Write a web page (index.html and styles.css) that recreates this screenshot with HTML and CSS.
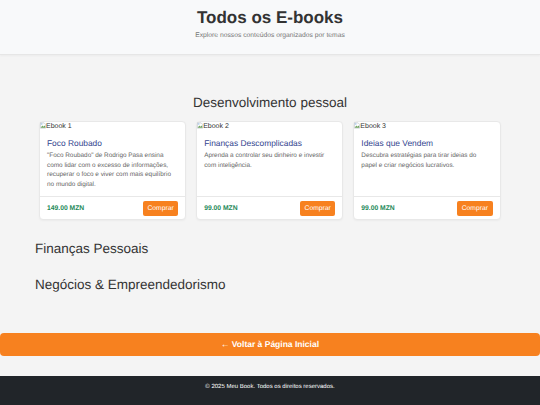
FILE: index.html
```html
<!DOCTYPE html>
<html lang="pt">
<head>
    <meta charset="UTF-8">
    <meta name="viewport" content="width=device-width, initial-scale=1.0">
    <title>Todos os E-books</title>
    <link rel="stylesheet" href="styles.css">
</head>
<body>
    <header class="topo">
        <h1>Todos os E-books</h1>
        <p>Explore nossos conteúdos organizados por temas</p>
    </header>
    <main class="conteudo">
        <section class="categoria">
            <h2 class="titulo-centro">Desenvolvimento pessoal</h2>
            <div class="cards">
                <article class="card">
                    <div class="capa">
                        <svg class="quebrada" viewBox="0 0 8 8"><path d="M.5.5h5l2 2v5h-7z" fill="#fff" stroke="#a9b0b8" stroke-width=".7"/><path d="M1 7l2-3 1.5 1.500L6 4l1 1.500V7z" fill="#6fa35f"/><path d="M1.200 1.200h2v1.600h-2z" fill="#9cc0ea"/></svg>
                        <span>Ebook 1</span>
                    </div>
                    <div class="corpo">
                        <h3>Foco Roubado</h3>
                        <p>"Foco Roubado" de Rodrigo Pasa ensina como lidar com o excesso de informações, recuperar o foco e viver com mais equilíbrio no mundo digital.</p>
                    </div>
                    <div class="rodape-card">
                        <strong>149.00 MZN</strong>
                        <a class="comprar" href="#">Comprar</a>
                    </div>
                </article>
                <article class="card">
                    <div class="capa">
                        <svg class="quebrada" viewBox="0 0 8 8"><path d="M.5.5h5l2 2v5h-7z" fill="#fff" stroke="#a9b0b8" stroke-width=".7"/><path d="M1 7l2-3 1.5 1.500L6 4l1 1.500V7z" fill="#6fa35f"/><path d="M1.200 1.200h2v1.600h-2z" fill="#9cc0ea"/></svg>
                        <span>Ebook 2</span>
                    </div>
                    <div class="corpo">
                        <h3>Finanças Descomplicadas</h3>
                        <p>Aprenda a controlar seu dinheiro e investir com inteligência.</p>
                    </div>
                    <div class="rodape-card">
                        <strong>99.00 MZN</strong>
                        <a class="comprar" href="#">Comprar</a>
                    </div>
                </article>
                <article class="card">
                    <div class="capa">
                        <svg class="quebrada" viewBox="0 0 8 8"><path d="M.5.5h5l2 2v5h-7z" fill="#fff" stroke="#a9b0b8" stroke-width=".7"/><path d="M1 7l2-3 1.5 1.500L6 4l1 1.500V7z" fill="#6fa35f"/><path d="M1.200 1.200h2v1.600h-2z" fill="#9cc0ea"/></svg>
                        <span>Ebook 3</span>
                    </div>
                    <div class="corpo">
                        <h3>Ideias que Vendem</h3>
                        <p>Descubra estratégias para tirar ideias do papel e criar negócios lucrativos.</p>
                    </div>
                    <div class="rodape-card">
                        <strong>99.00 MZN</strong>
                        <a class="comprar" href="#">Comprar</a>
                    </div>
                </article>
            </div>
        </section>
        <h2 class="titulo-lado">Finanças Pessoais</h2>
        <h2 class="titulo-lado">Negócios &amp; Empreendedorismo</h2>
    </main>
    <a class="voltar" href="#">← Voltar à Página Inicial</a>
    <footer class="rodape">© 2025 Meu Book. Todos os direitos reservados.</footer>
</body>
</html>
```

FILE: styles.css
```css
*{
    box-sizing: border-box;
}
body{
    margin: 0;
    background: #f4f4f4;
    color: #333;
    font-family: "Liberation Sans", Arial, sans-serif;
    text-rendering: geometricPrecision;
}
.topo{
    height: 55px;
    padding-top: 8px;
    background: #f8f9fa;
    border-bottom: 1px solid #e6e6e6;
    box-shadow: 0 1px 2px rgba(0,0,0,.04);
    text-align: center;
}
.topo h1{
    margin: 0;
    font-size: 17px;
    line-height: 19px;
}
.topo p{
    margin: 5px 0 0;
    font-size: 6.75px;
    line-height: 8px;
    color: #777;
}
.conteudo{
    padding: 39px 35px 0;
}
.categoria{
    margin-bottom: 20px;
}
.titulo-centro{
    margin: 0 0 10px;
    font-size: 13.5px;
    font-weight: normal;
    line-height: 17px;
    text-align: center;
}
.cards{
    display: grid;
    grid-template-columns: repeat(3, 1fr);
    gap: 10px;
    width: 461.500px;
    margin-left: 4px;
}
.card{
    display: flex;
    flex-direction: column;
    height: 99px;
    background: #fff;
    border: 1px solid #e8e8e8;
    border-radius: 4px;
    box-shadow: 0 1px 2px rgba(0,0,0,.04);
}
.capa{
    display: flex;
    align-items: flex-start;
    height: 9px;
    font-size: 7px;
    line-height: 9px;
}
.quebrada{
    width: 6px;
    height: 7px;
}
.corpo{
    flex: 1;
    padding: 7px 7px 0;
}
.corpo h3{
    margin: 0 0 2px;
    font-size: 8.4px;
    font-weight: normal;
    line-height: 11px;
    color: #34468f;
}
.corpo p{
    margin: 0;
    font-size: 6.4px;
    line-height: 9.6px;
    color: #666;
}
.rodape-card{
    display: flex;
    justify-content: space-between;
    align-items: center;
    height: 23px;
    padding: 0 7px;
    border-top: 1px solid #e8e8e8;
}
.rodape-card strong{
    font-size: 6.75px;
    color: #1e8a5a;
}
.comprar{
    padding: 3px 4.500px;
    background: #f7811f;
    border-radius: 2px;
    color: #fff;
    font-size: 6.75px;
    line-height: 9px;
    text-decoration: none;
}
.titulo-lado{
    margin: 0 0 19px;
    font-size: 13.5px;
    font-weight: normal;
    line-height: 17px;
}
.voltar{
    display: block;
    height: 23px;
    margin-top: 40px;
    background: #f7811f;
    border-radius: 4px;
    color: #fff;
    font-size: 8.5px;
    font-weight: bold;
    line-height: 22px;
    text-align: center;
    text-decoration: none;
}
.rodape{
    height: 29px;
    margin-top: 20px;
    padding-top: 7px;
    background: #212529;
    color: #fff;
    font-size: 6px;
    line-height: 8px;
    text-align: center;
}
```
